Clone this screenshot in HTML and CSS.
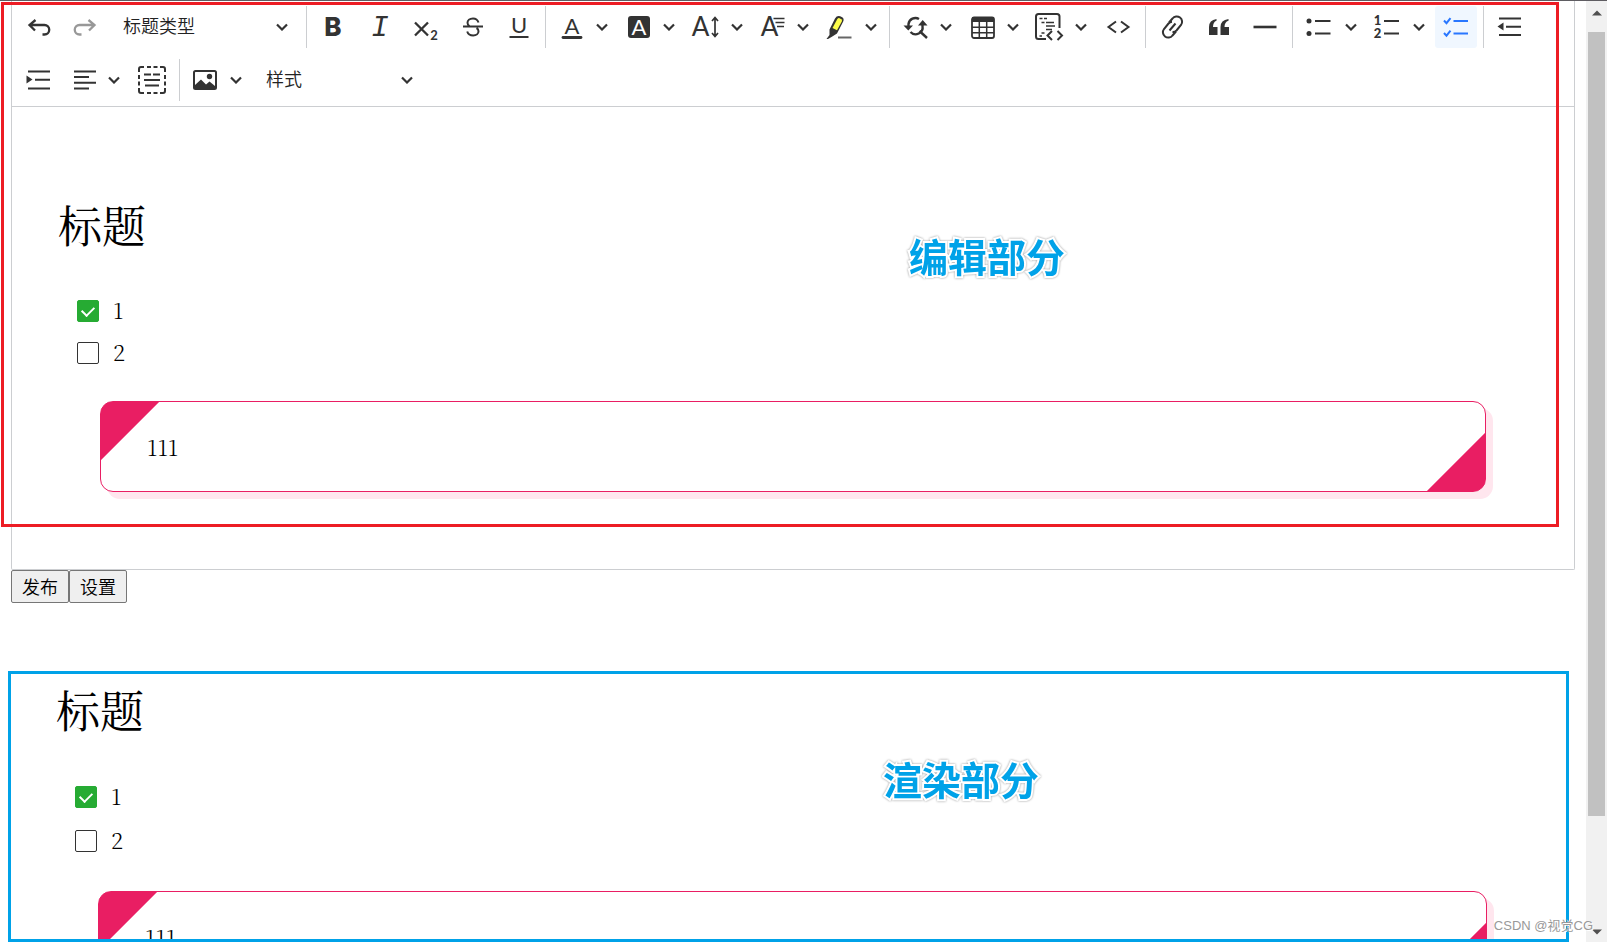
FILE: index.html
```html
<!DOCTYPE html>
<html lang="zh-CN">
<head>
<meta charset="utf-8">
<title>编辑器</title>
<link rel="stylesheet" href="styles.css">
</head>
<body>
<svg class="sprite" aria-hidden="true">
  <symbol id="chev" viewBox="0 0 12 8"><path d="M1 1.5l5 5 5-5" fill="none" stroke="currentColor" stroke-width="2.2"/></symbol>
</svg>
<main class="page">
  <section class="editor">
    <div class="toolbar" role="toolbar" aria-label="编辑器工具栏">
      <button class="tool" aria-label="撤销"><svg class="icon" viewBox="0 0 24 24"><path d="M8.500 5L2.500 10l5.500 5.500M3 10h14.500a4.500 4.500 0 0 1 0 9.500H15.500" stroke-width="2.300"/></svg></button>
      <button class="tool" aria-label="重做" disabled><svg class="icon" viewBox="0 0 24 24"><path d="M15.500 5l6 5-5.500 5.500M21 10H6.500a4.500 4.500 0 0 0 0 9.500H8.500" stroke-width="2.300"/></svg></button>
      <label class="picker picker-heading"><select class="picker-select" aria-label="标题类型"><option>标题类型</option></select><svg class="chev"><use href="#chev"/></svg></label>
      <span class="sep"></span>
      <button class="tool" aria-label="粗体"><svg class="icon letter" viewBox="0 0 24 24"><text class="t-bold" x="11" y="21">B</text></svg></button>
      <button class="tool" aria-label="斜体"><svg class="icon letter" viewBox="0 0 24 24"><text class="t-italic" x="12" y="21">I</text></svg></button>
      <button class="tool" aria-label="下标"><svg class="icon" viewBox="0 0 24 24"><path d="M1 7.500l13 13M14 7.500l-13 13" stroke-width="2.300"/><text class="t-small" x="20" y="25">2</text></svg></button>
      <button class="tool" aria-label="删除线"><svg class="icon" viewBox="0 0 24 24"><path d="M18.500 7.500C17.500 4.500 15.500 3.500 13 3.500c-3.500 0-5.500 2-5.500 4.200 0 1.500.6 2.500 2 3.300M3 11.500h20M16.500 13c1.500.8 2 1.800 2 3.200 0 2.500-2.200 4.300-5.300 4.300-3.200 0-5.200-1.500-6-4"/></svg></button>
      <button class="tool" aria-label="下划线"><svg class="icon letter" viewBox="0 0 24 24"><text class="t-thin" x="13" y="18">U</text><path d="M3.500 22h19"/></svg></button>
      <span class="sep"></span>
      <button class="tool drop" aria-label="字体颜色"><svg class="icon letter" viewBox="0 0 24 24"><text class="t-thin" x="12" y="18.500">A</text><path d="M3 22.500h18" stroke-width="2.800" stroke-linecap="round"/></svg><svg class="chev"><use href="#chev"/></svg></button>
      <button class="tool drop" aria-label="字体背景色"><svg class="icon letter" viewBox="0 0 24 24"><rect class="solid" x="1" y="1" width="22" height="22" rx="3"/><text class="t-inv" x="12" y="20">A</text></svg><svg class="chev"><use href="#chev"/></svg></button>
      <button class="tool drop drop-wide" aria-label="字号"><svg class="icon letter wide" viewBox="0 0 28 24"><text class="t-large" x="9.500" y="21">A</text><path d="M24 3v18M21 6l3-3.500 3 3.500M21 18l3 3.500 3-3.500" stroke-width="1.700"/></svg><svg class="chev"><use href="#chev"/></svg></button>
      <button class="tool drop" aria-label="字体"><svg class="icon letter" viewBox="0 0 24 24"><text class="t-large" x="8.500" y="21">A</text><path d="M12.500 3.500h11M14.500 7.500h9M16 11.500h7" stroke-width="1.700"/></svg><svg class="chev"><use href="#chev"/></svg></button>
      <button class="tool drop drop-wide" aria-label="高亮"><svg class="icon wide" viewBox="0 0 28 24"><path class="solid" d="M4.500 14.500L10 3.500Q12 .2 15.200 1.300l2 1q2.200 1.500 1 4.200L12 18.500l-5.500 3.500L3 24H1.500l3-4z"/><path class="yellow" d="M7.500 13L12.300 4q1-1.300 2.300-.8l1.700 1q1.200.9.500 2.400L12 15.300z"/><path d="M13 22.500h13.500" stroke="#666"/></svg><svg class="chev"><use href="#chev"/></svg></button>
      <span class="sep"></span>
      <button class="tool drop" aria-label="查找和替换"><svg class="icon" viewBox="0 0 24 24"><path d="M15 4A7 7 0 0 0 4.500 9v4M6.500 17a7 7 0 0 0 12-6V8M15.500 16l7.500 7" stroke-width="2.400"/><path class="solid" d="M-.5 10.500h9.500L4.300 15.500zM14 10.500h9.500L18.700 5z"/></svg><svg class="chev"><use href="#chev"/></svg></button>
      <button class="tool drop" aria-label="插入表格"><svg class="icon" viewBox="0 0 24 24"><rect x="1" y="2.500" width="22" height="20.500" rx="2" stroke-width="1.800"/><path class="solid" d="M1 2h22v5H1z"/><path d="M1 12.300h22M1 17.700h22M8.300 7v16M15.700 7v16" stroke-width="1.500"/></svg><svg class="chev"><use href="#chev"/></svg></button>
      <button class="tool drop drop-wide" aria-label="插入代码块"><svg class="icon big" viewBox="0 0 28 28"><path d="M11 26H3.500Q1 26 1 23.500v-20Q1 1 3.500 1H22q2.500 0 2.500 2.500V15"/><path d="M4.500 5.500h3M9 5.500h3M6.500 9.500h3M11 9.500h8M11 13h9M11 16.500h6M6.500 20h3M4.500 23h2.500" stroke-width="1.600"/><path d="M17 18l-4.500 4.500L17 27M22.500 18l4.500 4.500-4.500 4.500"/></svg><svg class="chev"><use href="#chev"/></svg></button>
      <button class="tool" aria-label="源代码"><svg class="icon" viewBox="0 0 24 24"><path d="M10 6.500L2.500 12l7.500 5.500M15 6.500l7.500 5.500-7.500 5.500"/></svg></button>
      <span class="sep"></span>
      <button class="tool" aria-label="链接"><svg class="icon" viewBox="0 0 24 24"><path d="M8 7.500l3.500-4a5.200 5.200 0 0 1 8.500 6.500l-4.500 5.500a5 5 0 0 1-4 1.500M15 16.500l-3.500 4A5.200 5.200 0 0 1 3 14l4.500-5.500a5 5 0 0 1 3.500-1.800M8.500 15.500l6-7"/></svg></button>
      <button class="tool" aria-label="引用"><svg class="icon" viewBox="0 0 24 24"><path class="solid" d="M2 12Q2 5 9.500 4v1.800Q6 7 6 12h4.500v8H2zM13.500 12q0-7 8-8v1.800q-4 1.200-4 6.200H22v8h-8.500z"/></svg></button>
      <button class="tool" aria-label="水平线"><svg class="icon" viewBox="0 0 24 24"><path d="M.5 12h23" stroke-width="2.600"/></svg></button>
      <span class="sep"></span>
      <button class="tool drop split" aria-label="项目列表"><svg class="icon" viewBox="0 0 24 24"><circle class="solid" cx="2" cy="6" r="2.500"/><circle class="solid" cx="2" cy="18.500" r="2.500"/><path d="M8 6H23.500M8 18.500H23.500"/></svg><svg class="chev"><use href="#chev"/></svg></button>
      <button class="tool drop split" aria-label="编号列表"><svg class="icon letter" viewBox="0 0 24 24"><text class="t-num" x="2.500" y="9.500">1</text><text class="t-num" x="2.500" y="23">2</text><path d="M9 6h15M9 18.500h15"/></svg><svg class="chev"><use href="#chev"/></svg></button>
      <button class="tool active" aria-label="待办列表" aria-pressed="true"><svg class="icon" viewBox="0 0 24 24"><path d="M0 5.500l2.500 2.700 4-5M0 18l2.500 2.700 4-5M9.500 6h14.500M9.500 18.500h14.500"/></svg></button>
      <span class="sep"></span>
      <button class="tool" aria-label="减少缩进"><svg class="icon" viewBox="0 0 24 24"><path d="M0 3.500h22M7 11.800h15M0 20h22"/><path class="solid" d="M4.500 7.500v8L-1.500 11.500z"/></svg></button>
      <button class="tool" aria-label="增加缩进"><svg class="icon" viewBox="0 0 24 24"><path d="M1 3.500h22M8 11.800h15M1 20.500h22"/><path class="solid" d="M-.5 7.500v8L5.500 11.500z"/></svg></button>
      <button class="tool drop" aria-label="对齐"><svg class="icon" viewBox="0 0 24 24"><path d="M2 3.500h22M2 9h15M2 14.800h22M2 20.500h15"/></svg><svg class="chev"><use href="#chev"/></svg></button>
      <button class="tool" aria-label="全选"><svg class="icon big" viewBox="0 0 28 28"><path d="M1 6V3q0-2 2-2h3M22 1h3q2 0 2 2v3M27 22v3q0 2-2 2h-3M6 27H3q-2 0-2-2v-3M9 1h4M15.500 1h4M9 27h4M15.500 27h4M1 9v4M1 15.500v4M27 9v4M27 15.500v4M6 8.500h7M15 8.500h7M6 14h16M7 19.500h14"/></svg></button>
      <span class="sep"></span>
      <button class="tool drop" aria-label="插入图像"><svg class="icon" viewBox="0 0 24 24"><rect x="0" y="3" width="22" height="18" rx="1.500"/><circle class="solid" cx="15.500" cy="8.500" r="2.700"/><path class="solid" d="M1 20v-3l6-5.500 5 5 3.500-3L21 18v2z"/></svg><svg class="chev"><use href="#chev"/></svg></button>
      <label class="picker picker-style"><select class="picker-select" aria-label="样式"><option>样式</option></select><svg class="chev"><use href="#chev"/></svg></label>
    </div>
    <article class="content content-edit">
      <h2 class="title">标题</h2>
      <ul class="todo">
        <li><label class="todo-item"><input class="check" type="checkbox" checked><span>1</span></label></li>
        <li><label class="todo-item"><input class="check" type="checkbox"><span>2</span></label></li>
      </ul>
      <div class="card"><p class="card-text">111</p></div>
    </article>
  </section>
  <div class="actions"><button class="action">发布</button><button class="action">设置</button></div>
  <article class="content content-view">
    <h2 class="title">标题</h2>
    <ul class="todo">
      <li><label class="todo-item"><input class="check" type="checkbox" checked><span>1</span></label></li>
      <li><label class="todo-item"><input class="check" type="checkbox"><span>2</span></label></li>
    </ul>
    <div class="card"><p class="card-text">111</p></div>
  </article>
</main>
<div class="scrollbar" aria-hidden="true">
  <svg class="arrow" viewBox="0 0 10 6"><path d="M0 5.500L5 .5l5 5z"/></svg>
  <span class="thumb"></span>
  <svg class="arrow" viewBox="0 0 10 6"><path d="M0 .5l5 5 5-5z"/></svg>
</div>
<div class="frame frame-edit"><span class="caption">编辑部分</span></div>
<div class="frame frame-view"><span class="caption">渲染部分</span></div>
<span class="watermark">CSDN @视觉CG</span>
</body>
</html>
```

FILE: styles.css
```css
* { box-sizing: border-box; }

body {
  position: relative;
  display: flex;
  height: 100vh;
  margin: 0;
  overflow: hidden;
  border-top: 1px solid #5f5d62;
  background: #fff;
  color: #000;
  font-family: "Liberation Sans", "Noto Sans CJK SC", sans-serif;
}

.sprite { position: absolute; width: 0; height: 0; }

.page { flex: 1; min-width: 0; padding: 0 11px; }

.editor {
  border: 1px solid #ccced1;
  border-top: 0;
  border-radius: 0 0 2px 2px;
}

/* Toolbar */
.toolbar {
  display: flex;
  flex-wrap: wrap;
  gap: 11px 4px;
  padding: 5px 6px;
  border-bottom: 1px solid #ccced1;
}

.sep { width: 1px; height: 42px; margin: 0 2px; background: #ccced1; }

.tool {
  display: flex;
  align-items: center;
  justify-content: center;
  width: 42px;
  height: 42px;
  padding: 0;
  border: 0;
  border-radius: 3px;
  background: none;
  color: #333;
}
.tool:disabled { opacity: .5; }
.tool.active { background: #f0f7ff; color: #2977ff; }

.drop {
  justify-content: space-between;
  width: 63px;
  padding: 0 7px 0 8px;
}
.drop-wide { padding-right: 6px; padding-left: 5px; }
.split { width: 64px; padding-right: 6px; }

.icon {
  flex: none;
  width: 24px;
  height: 24px;
  overflow: visible;
  fill: none;
  stroke: currentColor;
  stroke-width: 2;
}
.icon.wide { width: 28px; }
.icon.big { width: 28px; height: 28px; }
.icon .solid { fill: currentColor; stroke: none; }
.icon .yellow { fill: #fdfd4a; stroke: none; }
.icon text { fill: currentColor; stroke: none; text-anchor: middle; }
.t-bold { font: 800 26px Inter, sans-serif; }
.t-italic { font: italic 29px "Liberation Mono", monospace; }
.t-thin { font: 22px Lato, sans-serif; }
.t-large { font: 26px Lato, sans-serif; }
.icon .t-inv { fill: #fff; font: 22px Lato, sans-serif; }
.t-small { font: bold 13px Lato, sans-serif; }
.t-num { font: 900 13px Lato, sans-serif; }

.chev { flex: none; width: 12px; height: 8px; color: #333; }

.picker { display: grid; align-items: center; height: 42px; }
.picker > * { grid-area: 1 / 1; }
.picker .chev { justify-self: end; margin-right: 12px; pointer-events: none; }
.picker-heading { width: 190px; }
.picker-style { width: 172px; }
.picker-select {
  width: 100%;
  height: 42px;
  padding: 0 32px 5px 13px;
  border: 0;
  background: none;
  appearance: none;
  color: #222;
  font: 350 18px "Noto Sans CJK SC", sans-serif;
}

/* Document */
.content { font: 300 22px "Noto Serif CJK SC", "Liberation Serif", serif; }
.content-edit { padding: 87px 88px 77px; }
.content-view { padding: 76px 88px 0 87px; }

.title {
  margin: 0 0 36px -42px;
  font: 400 44px/60px "Noto Serif CJK SC", "Noto Sans CJK SC", serif;
}

.todo { margin: 0 0 27px -23px; padding: 0; list-style: none; }
.todo-item { display: flex; align-items: center; gap: 14px; height: 42px; }
.todo-item span { padding-bottom: 3px; line-height: 30px; }
.content-view .todo { margin-bottom: 28px; }
.content-view .todo-item { height: 44px; }

.check {
  width: 22px;
  height: 22px;
  margin: 0;
  border: 1px solid #333;
  border-radius: 2px;
  background: #fff;
  appearance: none;
}
.check:checked { display: grid; place-items: center; border-color: #26ab33; background: #26ab33; }
.check:checked::before {
  content: "";
  width: 6px;
  height: 10px;
  margin-bottom: 2px;
  border: solid #fff;
  border-width: 0 2px 2px 0;
  transform: rotate(45deg);
}

.card {
  padding: 30px 46px;
  border: 1px solid #e91e63;
  border-radius: 13px;
  background:
    linear-gradient(135deg, #e91e63 42px, transparent 43px) border-box,
    linear-gradient(315deg, #e91e63 42px, transparent 43px) border-box,
    #fff;
  box-shadow: 7px 7px 0 #ffe6ee;
}
.card-text { margin: 0; line-height: 29px; }

.actions { display: flex; }
.action {
  height: 33px;
  padding: 0 10px 2px;
  border: 1px solid #767676;
  border-radius: 2px;
  background: #efefef;
  color: #000;
  font: 350 18px/28px "Noto Sans CJK SC", sans-serif;
}

/* Window scrollbar */
.scrollbar {
  display: flex;
  flex-direction: column;
  align-items: center;
  width: 21px;
  padding: 9px 0 7px;
  background: #f1f1f1;
}
.arrow { width: 10px; height: 6px; fill: #505050; }
.thumb { width: 17px; height: 83.2vh; margin: 16px 0 auto; background: #c1c1c1; }

/* Annotations drawn over the page */
.frame { position: absolute; border: 3px solid #ed1c24; pointer-events: none; }
.frame-edit { top: 1px; right: 48px; left: 1px; height: 525px; }
.frame-view { top: 670px; right: 38px; bottom: 0; left: 8px; border-color: #00a2e8; }

.caption {
  position: absolute;
  top: 222px;
  left: 905px;
  color: #00a2e8;
  font: bold 39px/56px "Noto Sans CJK SC", sans-serif;
  white-space: nowrap;
  -webkit-text-stroke: 4px #fff;
  paint-order: stroke fill;
  filter: drop-shadow(0 0 1px #999);
}
.frame-view .caption { top: 76px; left: 872px; }

.watermark {
  position: absolute;
  right: 14px;
  bottom: 6px;
  color: #999;
  font: 13px/20px "Liberation Sans", "Noto Sans CJK SC", sans-serif;
  text-shadow: 1px 1px 0 #fff;
}
```
